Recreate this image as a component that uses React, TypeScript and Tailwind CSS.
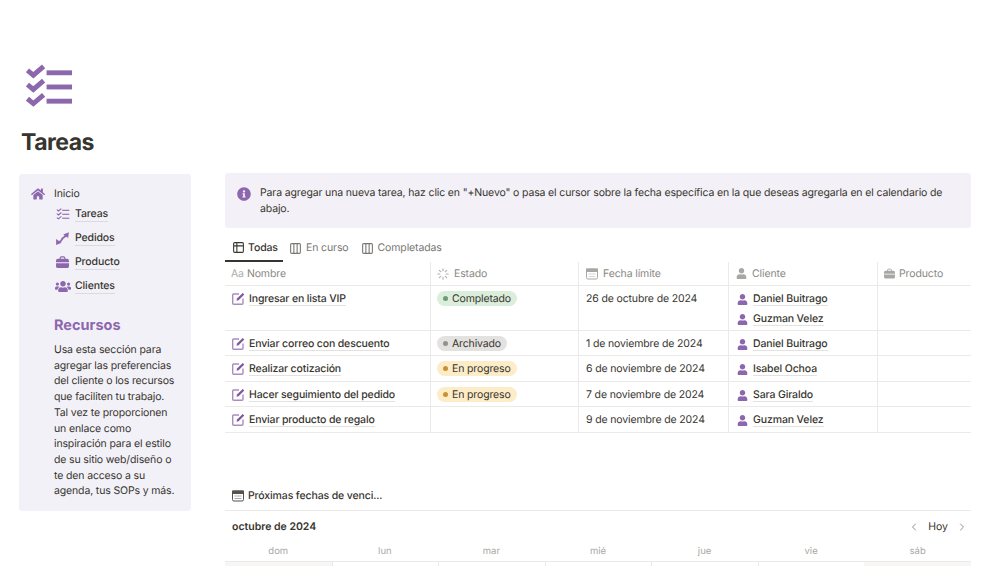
import { FaHome, FaInfoCircle, FaUser, FaUsers } from "react-icons/fa";
import { ChevronLeft, ChevronRight, Columns3, Table2 } from "lucide-react";

function Checklist({ className, strokeWidth = 5 }: { className: string; strokeWidth?: number }) {
  return (
    <svg viewBox="0 0 48 44" className={className} fill="none" stroke="currentColor" strokeWidth={strokeWidth}>
      <path d="M1.5 6 L7.5 11 L18 2" />
      <path d="M1.5 20.5 L7.5 25.5 L18 16.5" />
      <path d="M1.5 35 L7.5 40 L18 31" />
      <path d="M21 8.5 H47" />
      <path d="M21 23 H47" />
      <path d="M21 37.5 H47" />
    </svg>
  );
}

function CalendarIcon({ className }: { className: string }) {
  return (
    <svg viewBox="0 0 12 12" className={className} fill="none" stroke="currentColor" strokeWidth="1">
      <rect x="0.5" y="1" width="11" height="10" rx="1.5" />
      <rect x="0.5" y="1" width="11" height="2.5" fill="currentColor" />
      <path d="M2.5 6 H9.5 M2.5 8.5 H9.5" strokeWidth="0.8" opacity="0.6" />
    </svg>
  );
}

function SpinnerIcon() {
  return (
    <svg viewBox="0 0 12 12" className="h-[12px] w-[12px]" stroke="#b0afab" strokeWidth="1.1" strokeLinecap="round">
      <path d="M6 0.8 V2.8 M6 9.2 V11.2 M0.8 6 H2.8 M9.2 6 H11.2 M2.3 2.3 L3.7 3.7 M8.3 8.3 L9.7 9.7 M2.3 9.7 L3.7 8.3 M8.3 3.7 L9.7 2.3" />
    </svg>
  );
}

function BriefcaseIcon({ className }: { className: string }) {
  return (
    <svg viewBox="0 0 14 13" className={className} fill="currentColor">
      <path d="M4.5 3.5 V2.2 Q4.5 1 5.7 1 H8.3 Q9.5 1 9.5 2.2 V3.5" fill="none" stroke="currentColor" strokeWidth="1.2" />
      <path d="M2 3 H12 Q14 3 14 5 V6.8 H0 V5 Q0 3 2 3 Z" />
      <path d="M0 7.8 H14 V11 Q14 13 12 13 H2 Q0 13 0 11 Z" />
    </svg>
  );
}

function EditIcon() {
  return (
    <svg viewBox="0 0 13 13" className="h-[13px] w-[13px] shrink-0" fill="none" strokeWidth="1.4">
      <path d="M7 2 H1.7 Q0.7 2 0.7 3 V11.3 Q0.7 12.3 1.7 12.3 H10 Q11 12.3 11 11.3 V6.5" stroke="#a98cc2" />
      <path d="M4.5 8.7 L5 6.6 L10.7 0.9 L12.3 2.5 L6.6 8.2 Z" fill="#7d5a9e" />
    </svg>
  );
}

function NavLink({ icon, label }: { icon: React.ReactNode; label: string }) {
  return (
    <div className="flex h-[24px] items-center">
      <span className="flex w-[21px] justify-center text-[#8d67ad]">{icon}</span>
      <span className="ml-[2px] border-b border-[#dcdae0] text-[10.5px] font-medium leading-[14px] tracking-[-0.12px] text-[#37352f]">
        {label}
      </span>
    </div>
  );
}

function Client({ name }: { name: string }) {
  return (
    <div className="flex h-[20px] items-center">
      <FaUser className="ml-[1px] h-[11px] w-[11px] text-[#8d67ad]" />
      <span className="ml-[5px] border-b border-[#e3e2df] text-[10.5px] font-medium leading-[13px] tracking-[-0.12px] text-[#37352f]">
        {name}
      </span>
    </div>
  );
}

function Status({ label }: { label: string }) {
  const tones: Record<string, string> = {
    Completado: "bg-[#dbeddb]",
    Archivado: "bg-[#e3e2e0]",
    "En progreso": "bg-[#fdecc8]",
  };
  const dots: Record<string, string> = {
    Completado: "bg-[#6c9b7d]",
    Archivado: "bg-[#91918e]",
    "En progreso": "bg-[#cb912f]",
  };
  return (
    <span className={`inline-flex h-[15px] items-center rounded-full pl-[6px] pr-[6px] text-[#37352f] ${tones[label]}`}>
      <span className={`mr-[4px] h-[5px] w-[5px] rounded-full ${dots[label]}`} />
      {label}
    </span>
  );
}

const rows = [
  { name: "Ingresar en lista VIP", status: "Completado", date: "26 de octubre de 2024", clients: ["Daniel Buitrago", "Guzman Velez"], h: "h-[45px]" },
  { name: "Enviar correo con descuento", status: "Archivado", date: "1 de noviembre de 2024", clients: ["Daniel Buitrago"], h: "h-[25px]" },
  { name: "Realizar cotización", status: "En progreso", date: "6 de noviembre de 2024", clients: ["Isabel Ochoa"], h: "h-[26px]" },
  { name: "Hacer seguimiento del pedido", status: "En progreso", date: "7 de noviembre de 2024", clients: ["Sara Giraldo"], h: "h-[25px]" },
  { name: "Enviar producto de regalo", status: "", date: "9 de noviembre de 2024", clients: ["Guzman Velez"], h: "h-[26px]" },
];

const cols = "grid grid-cols-[206px_148px_150px_149px_93px]";
const days = ["dom", "lun", "mar", "mié", "jue", "vie", "sáb"];

export default function App() {
  return (
    <div className="h-[566px] w-[1005px] overflow-hidden bg-white pt-[64px] font-['Inter','Liberation_Sans',sans-serif] text-[#37352f] [text-rendering:geometricPrecision]">
      <div className="pl-[26px] text-[#8d67ad]">
        <Checklist className="h-[44px] w-[47px]" />
      </div>
      <h1 className="ml-[21px] mt-[19px] text-[23px] font-bold leading-[30px] tracking-[-0.5px] text-[#37352f]">Tareas</h1>

      <div className="mt-[17px] flex items-start pl-[19px]">
        <aside className="h-[337px] w-[172px] rounded-[3px] bg-[#f3f1f8] pl-[12px] pt-[13px]">
          <div className="flex h-[14px] items-center">
            <FaHome className="h-[14px] w-[14px] text-[#8d67ad]" />
            <span className="ml-[9px] text-[10.5px] tracking-[-0.14px] text-[#37352f]">Inicio</span>
          </div>
          <div className="ml-[21px] mt-[1px]">
            <NavLink icon={<Checklist className="h-[12px] w-[14px]" strokeWidth={4} />} label="Tareas" />
            <NavLink
              icon={
                <svg viewBox="0 0 16 16" className="h-[15px] w-[15px]" fill="currentColor">
                  <path d="M4.5 11.5 C7.5 11 6.5 9.5 8 8 C9.5 6.5 11 6.5 11.5 4.5" fill="none" stroke="currentColor" strokeWidth="1.9" />
                  <path d="M8.8 3.6 L14.8 1.2 L14 7.4 Z" />
                  <path d="M1.2 8.6 L7 12.4 L1.2 14.8 Z" />
                </svg>
              }
              label="Pedidos"
            />
            <NavLink icon={<BriefcaseIcon className="h-[12px] w-[13px]" />} label="Producto" />
            <NavLink icon={<FaUsers className="h-[15px] w-[16px]" />} label="Clientes" />
          </div>
          <h2 className="ml-[23px] mt-[18px] text-[14.5px] font-bold leading-[20px] text-[#8d67ad]">Recursos</h2>
          <p className="ml-[23px] mt-[6px] w-[122px] text-[10.5px] leading-[15.7px] tracking-[-0.14px] text-[#37352f]">
            Usa esta sección para agregar las preferencias del cliente o los recursos que faciliten tu trabajo. Tal vez te proporcionen un enlace como inspiración para el estilo de su sitio web/diseño o te den acceso a su agenda, tus SOPs y más.
          </p>
        </aside>

        <main className="-mt-px ml-[34px] w-[746px]">
          <div className="flex h-[55px] rounded-[3px] bg-[#f3f1f7] pl-[12px] pt-[12px]">
            <FaInfoCircle className="mt-[2px] h-[14px] w-[14px] shrink-0 text-[#8d67ad]" />
            <p className="ml-[9px] w-[690px] text-[10.5px] leading-[16px] tracking-[-0.14px] text-[#37352f]">
              Para agregar una nueva tarea, haz clic en "+Nuevo" o pasa el cursor sobre la fecha específica en la que deseas agregarla en el calendario de abajo.
            </p>
          </div>

          <div className="mt-[11px] flex h-[23px] items-start text-[10.5px] tracking-[-0.12px] text-[#787774]">
            <div className="flex h-[23px] w-[58px] items-start gap-[3px] border-b-2 border-[#37352f] pl-[7px] pt-[2px] font-medium text-[#37352f]">
              <Table2 className="h-[13px] w-[13px]" />
              <span className="leading-[14px]">Todas</span>
            </div>
            <div className="ml-[6px] flex items-center gap-[4px] pt-[2px]">
              <Columns3 className="h-[13px] w-[13px]" />
              <span className="leading-[14px]">En curso</span>
            </div>
            <div className="ml-[12px] flex items-center gap-[4px] pt-[2px]">
              <Columns3 className="h-[13px] w-[13px]" />
              <span className="leading-[14px]">Completadas</span>
            </div>
          </div>

          <div className={`${cols} h-[24px] border-b border-[#ebeae8] text-[10.5px] tracking-[-0.12px] text-[#8a8984]`}>
            <div className="flex items-center pl-[6px]"><span className="mr-[3px] text-[#b0afab]">Aa</span>Nombre</div>
            <div className="-ml-px flex items-center gap-[5px] border-l border-[#ebeae8] pl-[6px]"><SpinnerIcon />Estado</div>
            <div className="-ml-px flex items-center gap-[5px] border-l border-[#ebeae8] pl-[7px]"><CalendarIcon className="h-[12px] w-[12px] text-[#a8a7a3]" />Fecha límite</div>
            <div className="-ml-px flex items-center gap-[5px] border-l border-[#ebeae8] pl-[7px]"><FaUser className="h-[11px] w-[11px] text-[#a8a7a3]" />Cliente</div>
            <div className="-ml-px flex items-center gap-[4px] border-l border-[#ebeae8] pl-[6px]"><BriefcaseIcon className="h-[11px] w-[11px] text-[#a8a7a3]" />Producto</div>
          </div>

          {rows.map((r) => (
            <div key={r.name} className={`${cols} ${r.h} border-b border-[#ebeae8] text-[10.5px] tracking-[-0.14px]`}>
              <div className="flex items-start pl-[7px] pt-[6px]">
                <EditIcon />
                <span className="ml-[4px] border-b border-[#e3e2df] font-medium leading-[13px]">{r.name}</span>
              </div>
              <div className="-ml-px border-l border-[#ebeae8] pl-[6px] pt-[4px] leading-[15px]">
                {r.status && <Status label={r.status} />}
              </div>
              <div className="-ml-px border-l border-[#ebeae8] pl-[7px] pt-[6px] leading-[14px]">{r.date}</div>
              <div className="-ml-px border-l border-[#ebeae8] pl-[7px] pt-[3px]">
                {r.clients.map((c) => (
                  <Client key={c} name={c} />
                ))}
              </div>
              <div className="-ml-px border-l border-[#ebeae8]" />
            </div>
          ))}

          <div className="mt-[52px] flex h-[26px] items-center gap-[4px] border-b border-[#ebeae8] pb-[4px] pl-[7px] text-[10.5px] font-medium tracking-[-0.12px] text-[#37352f]">
            <CalendarIcon className="h-[12px] w-[12px] text-[#55534e]" />
            Próximas fechas de venci...
          </div>
          <div className="flex h-[31px] items-center justify-between pl-[7px] pr-[3px]">
            <span className="text-[10.5px] font-semibold text-[#37352f]">octubre de 2024</span>
            <div className="flex items-center gap-[8px] text-[10.5px] text-[#37352f]">
              <ChevronLeft className="h-[12px] w-[12px] text-[#91918e]" />
              Hoy
              <ChevronRight className="h-[12px] w-[12px] text-[#91918e]" />
            </div>
          </div>
          <div className="grid h-[20px] grid-cols-7 border-b border-[#ebeae8] pt-[3px] text-center text-[9.5px] text-[#a8a7a3]">
            {days.map((d) => (
              <span key={d}>{d}</span>
            ))}
          </div>
          <div className="grid h-[10px] grid-cols-7">
            {days.map((d, i) => (
              <div key={d} className={i === 0 || i === 6 ? "bg-[#f7f6f5]" : "border-l border-[#ebeae8]"} />
            ))}
          </div>
        </main>
      </div>
    </div>
  );
}
